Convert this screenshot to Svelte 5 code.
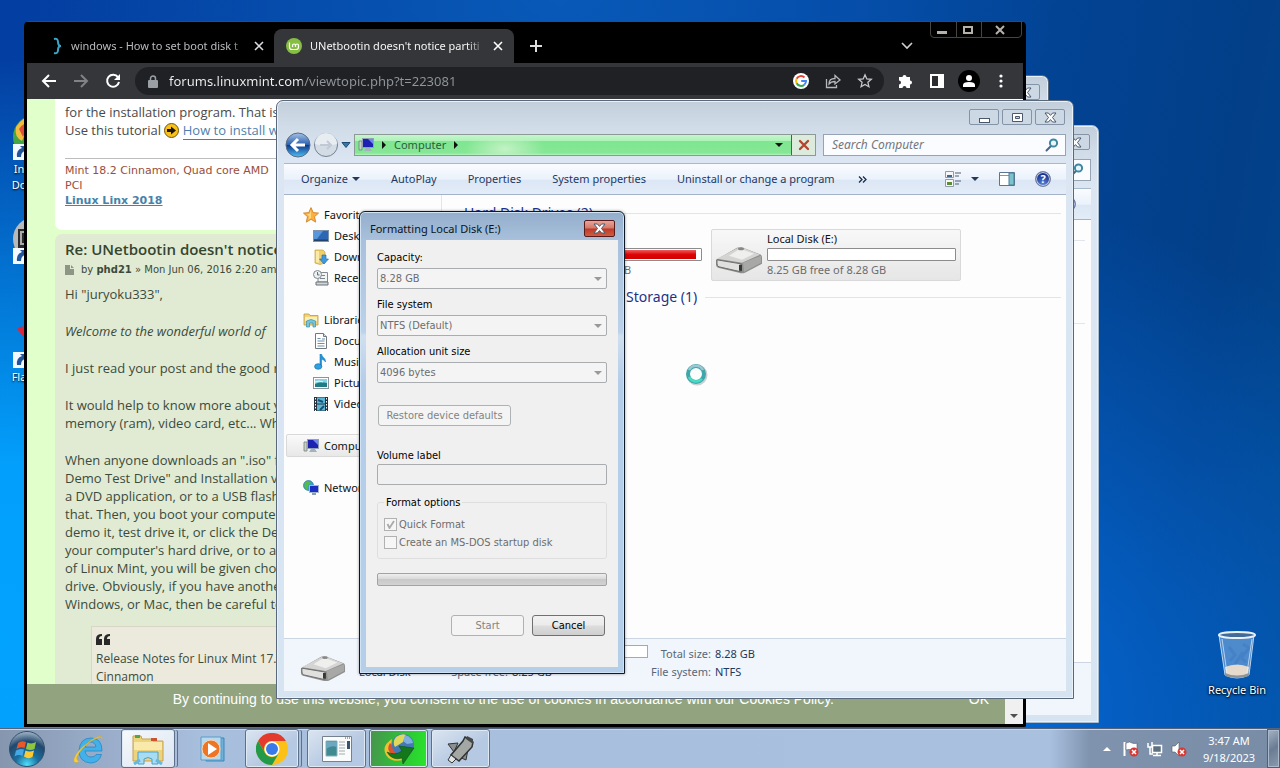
<script lang="ts">
	type NavItem = { label: string; icon: string; child?: boolean; selected?: boolean };

	const navGroups: NavItem[][] = [
		[
			{ label: 'Favorites', icon: 'star' },
			{ label: 'Desktop', icon: 'desktop', child: true },
			{ label: 'Downloads', icon: 'downloads', child: true },
			{ label: 'Recent Places', icon: 'recent', child: true }
		],
		[
			{ label: 'Libraries', icon: 'libraries' },
			{ label: 'Documents', icon: 'document', child: true },
			{ label: 'Music', icon: 'music', child: true },
			{ label: 'Pictures', icon: 'pictures', child: true },
			{ label: 'Videos', icon: 'videos', child: true }
		],
		[{ label: 'Computer', icon: 'computer', selected: true }],
		[{ label: 'Network', icon: 'network' }]
	];

	const commands = ['AutoPlay', 'Properties', 'System properties', 'Uninstall or change a program'];

	const drives = [
		{ name: 'Local Disk (C:)', used: 98, space: '324 MB free of 23.6 GB', selected: false },
		{ name: 'Local Disk (E:)', used: 0, space: '8.25 GB free of 8.28 GB', selected: true }
	];

	const fields = [
		{ id: 'capacity', label: 'Capacity:', value: '8.28 GB' },
		{ id: 'filesystem', label: 'File system', value: 'NTFS (Default)' },
		{ id: 'allocation', label: 'Allocation unit size', value: '4096 bytes' }
	];

	let url = $state('forums.linuxmint.com/viewtopic.php?t=223081');
	let search = $state('');
	let volumeLabel = $state('');
</script>

{#snippet closeGlyph()}
	<svg width="13" height="11" viewBox="0 0 13 11" aria-hidden="true">
		<path d="M1 1h3.4l2.1 2.4L8.600 1H12L8.500 5.500 12 10H8.600L6.500 7.600 4.400 10H1l3.500-4.500z" fill="#fff" stroke="#4b586b" />
	</svg>
{/snippet}

{#snippet windowButtons()}
	<div class="frame-buttons">
		<button aria-label="Minimize">
			<svg width="13" height="11" viewBox="0 0 13 11"><rect x="1.500" y="6.500" width="10" height="4" fill="#fff" stroke="#4b586b" /></svg>
		</button>
		<button aria-label="Maximize">
			<svg width="13" height="11" viewBox="0 0 13 11"><path d="M1.500 1.500h10v8h-10z" fill="#fff" stroke="#4b586b" /><path d="M4.500 4.500h4v2h-4z" fill="#c7d3e2" stroke="#4b586b" /></svg>
		</button>
		<button aria-label="Close">{@render closeGlyph()}</button>
	</div>
{/snippet}

{#snippet magnifier()}
	<svg class="magnifier" width="14" height="14" viewBox="0 0 14 14" aria-hidden="true">
		<path d="M1.500 12.500 6 8" stroke="#4a6580" stroke-width="2" stroke-linecap="round" />
		<circle cx="8.500" cy="5" r="3.600" fill="#e8f6fb" stroke="#3f87a3" stroke-width="2" />
	</svg>
{/snippet}

{#snippet drive(size: number)}
	<svg width={size} height={size * 0.66} viewBox="0 0 48 30" aria-hidden="true">
		<path d="M1 15 22 3q3-1 6 0l18 7q1 1 1 3v6L30 28q-3 1-6 0L3 23q-2-1-2-3z" fill="#8f908e" />
		<path d="M2 14 23 3q3-1 5 0l17 7L27 18z" fill="#d4d4d2" />
		<path d="M14 11 25 4l14 5-12 6z" fill="#efefed" />
		<path d="M2 15l24 4v8L4 22q-2-1-2-3z" fill="#e0e0df" stroke="#6c6d6b" />
		<path d="M28 18 46 11v7L29 27z" fill="#a8a9a7" />
		<path d="M24 20h3v6h-3z" fill="#333a35" />
		<ellipse cx="26" cy="4" rx="3" ry="1.500" fill="#888" />
	</svg>
{/snippet}

{#snippet navIcon(name: string)}
	<svg width="16" height="16" viewBox="0 0 16 16" aria-hidden="true">
		{#if name === 'star'}
			<path d="M8 .6l2.200 5 5.300.5-4 3.600 1.200 5.400L8 12.300l-4.700 2.800 1.200-5.400-4-3.600 5.300-.5z" fill="#fbb040" stroke="#d08226" stroke-width=".9" />
			<path d="M8 3v8l-2.600 1.600.8-3.300L4 7.200l2.700-.4z" fill="#ffd680" />
		{:else if name === 'desktop'}
			<rect x=".5" y="2.500" width="15" height="11" fill="#2b67b5" stroke="#7d93ad" />
			<path d="M1 3h9L4 11H1z" fill="#5796d8" /><path d="M1 11.500h14V13H1z" fill="#264264" />
		{:else if name === 'downloads'}
			<path d="M2 1h8l2 2v11l-5 1.500L2 14z" fill="#f0cf68" stroke="#c99d3c" stroke-width=".7" />
			<path d="M3 2h3v12l-3-1z" fill="#fbe9a8" />
			<path d="M9 6h4v4h2.500L11 15 6.500 10H9z" fill="#3e9ae0" stroke="#1b65ab" stroke-width=".6" />
		{:else if name === 'recent'}
			<path d="M5 2.500h9.500V12H5z" fill="#f3f4f4" stroke="#84898e" /><path d="M8 5.500h4M7 8.500h5" stroke="#7d858c" />
			<circle cx="4.500" cy="4.500" r="4" fill="#edf1f4" stroke="#7d8791" /><path d="M4.500 2v3h2M3 12h12v3H3z" fill="#d1d4d6" stroke="#6b737b" />
		{:else if name === 'libraries'}
			<path d="M1 2h5l1 1.500h8V13H1z" fill="#f3d47b" stroke="#bd9844" stroke-width=".8" /><path d="M2 5h12v4H2z" fill="#fbefb9" />
			<path d="M3.500 15V9q4.500-3 9 0v6h-2.500v-4H6.500v4z" fill="#78c6dc" stroke="#3891af" stroke-width=".7" />
		{:else if name === 'document'}
			<path d="M2.500.5h8l3 3v12h-11z" fill="#fff" stroke="#71797f" /><path d="M10.500.5v3h3" fill="#dadfe3" stroke="#71797f" />
			<path d="M4.500 5.500h3M4.500 8h7M4.500 10.500h7M4.500 13h7M9 6h3" stroke="#6b8fac" />
		{:else if name === 'music'}
			<path d="M7 0h1.500c0 3 4.500 4 4 8-1-2-3-2.500-4-2.500v7H7z" fill="#2593d6" stroke="#1c7fc0" stroke-width=".6" />
			<ellipse cx="5.200" cy="12.500" rx="3.600" ry="2.800" fill="#2ba2e4" stroke="#1c6fa8" stroke-width=".7" />
		{:else if name === 'pictures'}
			<rect x=".5" y="2.500" width="15" height="11" fill="#fff" stroke="#8c949b" /><path d="M2 4h12v8H2z" fill="#86d3e2" />
			<path d="M2 9q5-3 12-1v4H2z" fill="#1f7c84" /><path d="M2 7q4-2 8 0" stroke="#e6fafd" fill="none" />
		{:else if name === 'videos'}
			<path d="M1 1h14v14H1z" fill="#26323f" /><path d="M4 1.500h8v6H4zM4 8.500h8v6H4z" fill="#5cb7d4" />
			<path d="M5 4l5 2M7 14l4-4" stroke="#164e78" stroke-width="2" /><path d="M2.500 2v13M13.500 2v13" stroke="#fff" stroke-dasharray="1.500 1.500" />
		{:else if name === 'computer'}
			<path d="M1 4h3v9H1z" fill="#c9cfc9" stroke="#75807a" stroke-width=".8" /><rect x="4.500" y="1.500" width="11" height="9" fill="#1d22b0" stroke="#93a0b5" />
			<path d="M10 2h5v5z" fill="#7189ee" /><path d="M8 11h4l2 3H6z" fill="#a4b2bf" />
		{:else}
			<circle cx="5.500" cy="5.500" r="5" fill="#35a0cf" stroke="#1b6a9b" stroke-width=".6" /><path d="M2 2q4-2 6 1L5 5q1 3-1 5Q0 7 2 2z" fill="#58bb44" />
			<rect x="6.500" y="5.500" width="9" height="7" fill="#1c2fc4" stroke="#a7b6cb" /><path d="M9 13h4v2H9z" fill="#8aa0b8" />
		{/if}
	</svg>
{/snippet}

{#snippet shortcut(glyph: string)}
	<svg width="48" height="48" viewBox="0 0 48 48" aria-hidden="true">
		{#if glyph === 'idm'}
			<circle cx="22" cy="24" r="22" fill="#46a545" /><path d="M3 14Q10 2 25 3v14Q12 18 9 28 1 24 3 14z" fill="#f1bd3d" /><path d="M6 16q6-9 18-8v7Q12 16 10 24z" fill="#df5137" />
		{:else if glyph === 'disc'}
			<circle cx="22" cy="22" r="22" fill="#b8b9b9" /><path d="M5 12h20v20H5z" fill="#292b2c" /><path d="M8 15h9v12H8z" fill="none" stroke="#aaa" stroke-width="2" />
		{:else}
			<path d="M4 8l5-3 12 12-6 4z" fill="#dd263b" />
		{/if}
		<path d="M0 31h16v16H0z" fill="#f4f8ff" /><path d="M4 44q-1-7 5-9l-2-2h7v7l-2-2q-4 1-4 6z" fill="#21569f" />
	</svg>
{/snippet}

<div class="screen">
	<main class="desktop">
		<div class="shortcuts">
			<div class="shortcut">{@render shortcut('idm')}<span>In<br />Do</span></div>
			<div class="shortcut">{@render shortcut('disc')}</div>
			<div class="shortcut">{@render shortcut('flash')}<span>Fla</span></div>
		</div>

		<div class="recycle">
			<svg width="40" height="50" viewBox="0 0 40 50" aria-hidden="true">
				<path d="M2 5h35l-5 40q-12 6-24 0z" fill="#a9c9ee" fill-opacity=".45" stroke="#bcd4ee" />
				<path d="M8 37q12-5 24 0l-1 8q-11 5-22 0z" fill="#e6dacd" /><path d="M8 43q12 5 24 0v3q-12 4-24 0z" fill="#8e9599" />
				<path d="M12 17l6 8-5 6M26 14l6 4-8 10 5 4M18 34l8-12" fill="none" stroke="#3f7cc3" stroke-width="3" opacity=".6" />
				<path d="M5 9l5 34M35 9l-5 34" stroke="#e3f1ff" opacity=".7" />
				<ellipse cx="20" cy="5" rx="18" ry="3" fill="#436b9a" stroke="#e8f1f8" stroke-width="2" />
			</svg>
			<span>Recycle Bin</span>
		</div>

		<section class="window explorer back-upper" aria-label="Explorer">
			<header class="titlebar">{@render windowButtons()}</header>
		</section>

		<section class="window explorer back-lower" aria-label="Libraries">
			<header class="titlebar">{@render windowButtons()}</header>
			<div class="navbar">
				<div class="search">{@render magnifier()}</div>
			</div>
			<div class="client">
				<div class="commandbar"><span class="help">?</span></div>
				<div class="back-body"><hr /><hr /></div>
				<div class="details"></div>
			</div>
		</section>

		<section class="window browser" aria-label="Chrome">
			<header class="tabstrip">
				<div class="tab">
					<svg width="16" height="18" viewBox="0 0 16 18" aria-hidden="true"><path d="M5 2q4-1 4 3t3 4q-3 0-3 4t-4 3" fill="none" stroke="#3aa5c4" stroke-width="2" /></svg>
					<span>windows - How to set boot disk t</span>
					<button aria-label="Close tab"><svg width="10" height="10" viewBox="0 0 10 10"><path d="M1 1l8 8M9 1 1 9" stroke="#dadce0" stroke-width="1.600" /></svg></button>
				</div>
				<div class="tab active">
					<svg width="16" height="16" viewBox="0 0 16 16" aria-hidden="true"><circle cx="8" cy="8" r="8" fill="#86be43" /><path d="M3.500 4.500V9q0 2.500 2.500 2.500h4Q12.500 11.500 12.500 9V7.500q0-1.500-1.500-1.500T9.500 7.500V9M9.500 7.500Q9.500 6 8 6T6.500 7.500V9" fill="none" stroke="#fff" stroke-width="1.200" /></svg>
					<span>UNetbootin doesn't notice partiti</span>
					<button aria-label="Close tab"><svg width="10" height="10" viewBox="0 0 10 10"><path d="M1 1l8 8M9 1 1 9" stroke="#fff" stroke-width="1.600" /></svg></button>
				</div>
				<button class="new-tab" aria-label="New tab"><svg width="12" height="12" viewBox="0 0 12 12"><path d="M6 0v12M0 6h12" stroke="#dcdcdc" stroke-width="2" /></svg></button>
				<button class="tab-search" aria-label="Search tabs"><svg width="12" height="8" viewBox="0 0 12 8"><path d="M1 1l5 5 5-5" fill="none" stroke="#d0d0d0" stroke-width="1.600" /></svg></button>
				<div class="dark-buttons">
					<button aria-label="Minimize"><svg width="12" height="10" viewBox="0 0 12 10"><path d="M1 6h10v3H1z" fill="#b6b1aa" /></svg></button>
					<button aria-label="Maximize"><svg width="12" height="10" viewBox="0 0 12 10"><path d="M2 2h8v6H2z" fill="none" stroke="#b6b1aa" stroke-width="2" /></svg></button>
					<button aria-label="Close"><svg width="12" height="10" viewBox="0 0 12 10"><path d="M2 1l8 8M10 1 2 9" stroke="#b6b1aa" stroke-width="2" /></svg></button>
				</div>
			</header>

			<div class="browser-toolbar">
				<button aria-label="Back"><svg width="16" height="16" viewBox="0 0 16 16"><path d="M15 8H2M8 2 2 8l6 6" fill="none" stroke="#fff" stroke-width="2" /></svg></button>
				<button aria-label="Forward"><svg width="16" height="16" viewBox="0 0 16 16"><path d="M1 8h13M8 2l6 6-6 6" fill="none" stroke="#808285" stroke-width="2" /></svg></button>
				<button aria-label="Reload"><svg width="16" height="16" viewBox="0 0 16 16"><path d="M13 4.200A6 6 0 1 0 14 9" fill="none" stroke="#fff" stroke-width="2" /><path d="M15 1v6H9z" fill="#fff" /></svg></button>
				<div class="omnibox">
					<svg width="10" height="13" viewBox="0 0 10 13" aria-hidden="true"><rect y="5" width="10" height="8" rx="1" fill="#9aa0a6" /><path d="M2.500 6V3.500a2.500 2.500 0 0 1 5 0V6" fill="none" stroke="#9aa0a6" stroke-width="1.500" /></svg>
					<input aria-label="Address" bind:value={url} />
					<svg width="16" height="16" viewBox="0 0 16 16" aria-hidden="true">
						<circle cx="8" cy="8" r="8" fill="#fff" />
						<path d="M11.500 4.500A5 5 0 0 0 3.600 5.700" fill="none" stroke="#ea4335" stroke-width="2" /><path d="M3.600 5.700a5 5 0 0 0 0 4.600" fill="none" stroke="#fbbc05" stroke-width="2" />
						<path d="M3.600 10.300a5 5 0 0 0 7.700 1.400" fill="none" stroke="#34a853" stroke-width="2" /><path d="M11.300 11.700A5 5 0 0 0 13 8H8.200" fill="none" stroke="#4285f4" stroke-width="2" />
					</svg>
					<svg width="16" height="16" viewBox="0 0 16 16" fill="none" stroke="#b5b8bc" stroke-width="1.300" aria-hidden="true"><path d="M1.500 6v8.500h10V12M4 11q0-5.500 6-5.500V2.500L15 7l-5 4V8.500q-4 0-6 2.500z" /></svg>
					<svg width="16" height="16" viewBox="0 0 16 16" aria-hidden="true"><path d="M8 1.800l1.800 4.100 4.500.4-3.400 3 1 4.400L8 11.400l-3.900 2.300 1-4.400-3.400-3 4.500-.4z" fill="none" stroke="#c5c8cc" stroke-width="1.300" /></svg>
				</div>
				<button aria-label="Extensions"><svg width="16" height="16" viewBox="0 0 16 16"><path d="M2 4h3.500a2 2 0 1 1 4 0H13v3.500a2 2 0 1 1 0 4V15H9.500a2 2 0 0 0-4 0H2v-3.500a2 2 0 0 0 0-4z" fill="#fff" /></svg></button>
				<button aria-label="Side panel"><svg width="16" height="16" viewBox="0 0 16 16"><path d="M2 2h12v12H2z" fill="#2c2d30" stroke="#fff" stroke-width="2" /><path d="M9 2h5v12H9z" fill="#fff" /></svg></button>
				<button aria-label="Profile"><svg width="22" height="22" viewBox="0 0 22 22"><circle cx="11" cy="11" r="11" fill="#000" /><circle cx="11" cy="8" r="3" fill="#fff" /><path d="M5 17v-2q0-3 6-3t6 3v2z" fill="#fff" /></svg></button>
				<button aria-label="Menu"><svg width="4" height="14" viewBox="0 0 4 14"><circle cx="2" cy="2" r="1.600" fill="#fff" /><circle cx="2" cy="7" r="1.600" fill="#fff" /><circle cx="2" cy="12" r="1.600" fill="#fff" /></svg></button>
			</div>

			<div class="page">
				<article class="post first">
					<div class="post-text">
						for the installation program. That is<br />
						Use this tutorial
						<svg class="arrow-smiley" width="15" height="15" viewBox="0 0 15 15" aria-hidden="true"><circle cx="7.500" cy="7.500" r="7" fill="#f9c21b" stroke="#6e5410" /><path d="M3 6h4V3.500l5 4-5 4V9H3z" fill="#1d1604" /></svg>
						<a href="#tutorial">How to install with</a>
					</div>
					<div class="signature">
						Mint 18.2 Cinnamon, Quad core AMD<br />PCI<br />
						<a href="#linx">Linux Linx 2018</a>
					</div>
				</article>

				<article class="post second">
					<h3>Re: UNetbootin doesn't notice</h3>
					<div class="byline">
						<svg width="9" height="10" viewBox="0 0 9 10" aria-hidden="true"><path d="M0 0h5v4h4v6H0zM6 0l3 3H6z" fill="#8d9585" /></svg>
						<span>by <strong>phd21</strong> » Mon Jun 06, 2016 2:20 am</span>
					</div>
					<div class="post-text">
						<p>Hi "juryoku333",</p>
						<p><em>Welcome to the wonderful world of</em></p>
						<p>I just read your post and the good re</p>
						<p>It would help to know more about yo<br />memory (ram), video card, etc... Wh</p>
						<p>
							When anyone downloads an ".iso" file<br />Demo Test Drive" and Installation ver<br />a DVD application, or to a USB flash<br />
							that. Then, you boot your computer<br />demo it, test drive it, or click the De<br />your computer's hard drive, or to an<br />
							of Linux Mint, you will be given choic<br />drive. Obviously, if you have another<br />Windows, or Mac, then be careful to
						</p>
					</div>
					<blockquote>
						<svg width="14" height="12" viewBox="0 0 14 12" aria-hidden="true"><path d="M6 0v2Q3 2 3 5h3v6H0V5q0-5 6-5zM14 0v2q-3 0-3 3h3v6H8V5q0-5 6-5z" fill="#292929" /></svg>
						<div>Release Notes for Linux Mint 17.<br />Cinnamon</div>
					</blockquote>
				</article>

				<div class="cookie-row">
					<div class="cookiebar">
						<p>By continuing to use this website, you consent to the use of cookies in accordance with our Cookies Policy.</p>
						<button>OK</button>
					</div>
					<button class="scroll-down" aria-label="Scroll down"><svg width="8" height="4" viewBox="0 0 8 4"><path d="M0 0h8L4 4z" fill="#505050" /></svg></button>
				</div>
			</div>
		</section>

		<section class="window explorer front" aria-label="Computer">
			<header class="titlebar">{@render windowButtons()}</header>
			<div class="navbar">
				<div class="travel">
					<button aria-label="Back">
						<svg width="26" height="26" viewBox="0 0 26 26">
							<defs><linearGradient id="orb" x2="0" y2="1"><stop stop-color="#a5c2e8" /><stop offset=".48" stop-color="#2e62ae" /><stop offset=".52" stop-color="#0f3c8d" /><stop offset="1" stop-color="#4fc0f4" /></linearGradient></defs>
							<circle cx="13" cy="13" r="12" fill="url(#orb)" stroke="#5a6b83" /><path d="M20 13H8M13 7l-6 6 6 6" fill="none" stroke="#fff" stroke-width="3" />
						</svg>
					</button>
					<button aria-label="Forward">
						<svg width="26" height="26" viewBox="0 0 26 26"><circle cx="13" cy="13" r="11.500" fill="#d3dbe5" stroke="#748294" /><path d="M2 12a11 11 0 0 1 22 0q-11 3-22 0z" fill="#e8edf2" /><path d="M7 13h11M14 9l4 4-4 4" fill="none" stroke="#c0c9d4" stroke-width="2" /></svg>
					</button>
					<button aria-label="Recent pages"><svg width="10" height="6" viewBox="0 0 10 6"><path d="M1 .5h8l-4 5z" fill="#3977a6" stroke="#1e4a78" /></svg></button>
				</div>
				<div class="addressbar">
					{@render navIcon('computer')}
					<svg width="4" height="8" viewBox="0 0 4 8" aria-hidden="true"><path d="M0 0l4 4-4 4z" fill="#111" /></svg>
					<button class="crumb">Computer</button>
					<svg width="4" height="8" viewBox="0 0 4 8" aria-hidden="true"><path d="M0 0l4 4-4 4z" fill="#111" /></svg>
					<button class="history" aria-label="Previous locations"><svg width="8" height="4" viewBox="0 0 8 4"><path d="M0 0h8L4 4z" fill="#111" /></svg></button>
					<button class="stop" aria-label="Stop"><svg width="12" height="12" viewBox="0 0 12 12"><path d="M2 2l8 8M10 2l-8 8" stroke="#b3452f" stroke-width="2.400" stroke-linecap="round" /></svg></button>
				</div>
				<div class="search">
					<input type="search" aria-label="Search Computer" placeholder="Search Computer" bind:value={search} />
					{@render magnifier()}
				</div>
			</div>

			<div class="client">
				<div class="commandbar">
					<button class="organize">Organize <svg width="8" height="4" viewBox="0 0 8 4"><path d="M0 0h8L4 4z" fill="#26395c" /></svg></button>
					{#each commands as command (command)}
						<button>{command}</button>
					{/each}
					<button class="more" aria-label="More commands"><svg width="9" height="7" viewBox="0 0 9 7"><path d="M1 .5l3 3-3 3M5 .5l3 3-3 3" fill="none" stroke="#1b2b4a" stroke-width="1.300" /></svg></button>
					<div class="view-tools">
						<button aria-label="Change view">
							<svg width="18" height="16" viewBox="0 0 18 16"><path d="M.5.500h8v6h-8zM.5 8.500h8v7h-8z" fill="#f5f7f9" stroke="#8e9aa5" /><path d="M2 4h5v2H2z" fill="#41648f" /><path d="M2 11h5v3H2z" fill="#5c8d2e" /><path d="M10 2h6M10 5h4M10 10h6M10 13h4" stroke="#4f5f72" /></svg>
							<svg width="8" height="4" viewBox="0 0 8 4"><path d="M0 0h8L4 4z" fill="#26395c" /></svg>
						</button>
						<button aria-label="Preview pane"><svg width="16" height="14" viewBox="0 0 16 14"><path d="M.5.500h15v13H.5z" fill="#fff" stroke="#5c7591" /><path d="M1 3.500h9" stroke="#7b98b4" /><path d="M10 1h5v12h-5z" fill="#7bc4cb" stroke="#4c7d96" /></svg></button>
						<button aria-label="Help"><span class="help">?</span></button>
					</div>
				</div>

				<div class="browse">
					<nav>
						{#each navGroups as group}
							<ul>
								{#each group as item (item.label)}
									<li class:child={item.child} class:selected={item.selected}>
										<a href="#{item.icon}">{@render navIcon(item.icon)}{item.label}</a>
									</li>
								{/each}
							</ul>
						{/each}
					</nav>
					<div class="files">
						<h2>Hard Disk Drives (2)</h2>
						<div class="tiles">
							{#each drives as item (item.name)}
								<div class="tile" class:selected={item.selected}>
									{@render drive(48)}
									<div class="tile-copy">
										<span>{item.name}</span>
										<div class="capacity"><div class="capacity-used" style:width="{item.used}%"></div></div>
										<span class="space">{item.space}</span>
									</div>
								</div>
							{/each}
						</div>
						<h2>Devices with Removable Storage (1)</h2>
					</div>
				</div>

				<footer class="details">
					{@render drive(46)}
					<dl class="name"><dd>Local Disk (E:)</dd><dd>Local Disk</dd></dl>
					<dl class="used"><dt>Space used:</dt><dd class="mini-bar"></dd><dt>Space free:</dt><dd>8.25 GB</dd></dl>
					<dl class="total"><dt>Total size:</dt><dd>8.28 GB</dd><dt>File system:</dt><dd>NTFS</dd></dl>
				</footer>
			</div>
		</section>

		<section class="dialog" role="dialog" aria-label="Formatting Local Disk (E:)">
			<header>
				<h1>Formatting Local Disk (E:)</h1>
				<button aria-label="Close">{@render closeGlyph()}</button>
			</header>
			<form>
				{#each fields as field (field.id)}
					<div class="field">
						<label for={field.id}>{field.label}</label>
						<select id={field.id} disabled><option>{field.value}</option></select>
					</div>
				{/each}
				<button class="restore" type="button" disabled>Restore device defaults</button>
				<div class="field volume">
					<label for="volume">Volume label</label>
					<input id="volume" type="text" disabled bind:value={volumeLabel} />
				</div>
				<fieldset>
					<legend>Format options</legend>
					<label><input type="checkbox" checked disabled />Quick Format</label>
					<label><input type="checkbox" disabled />Create an MS-DOS startup disk</label>
				</fieldset>
				<progress value="0" max="100" aria-label="Format progress"></progress>
				<div class="actions">
					<button type="button" disabled>Start</button>
					<button type="button">Cancel</button>
				</div>
			</form>
		</section>

		<svg class="busy" width="24" height="24" viewBox="0 0 24 24" aria-hidden="true">
			<circle cx="13" cy="13" r="9" fill="none" stroke="#9ba3a6" stroke-width="3" opacity=".5" />
			<circle cx="12" cy="12" r="8" fill="#fbfdfd" stroke="#3fa6a9" stroke-width="4" />
			<path d="M5 8A8 8 0 0 1 19 8" fill="none" stroke="#9cc7d3" stroke-width="2.500" /><path d="M5 15a8 8 0 0 0 13 2" fill="none" stroke="#46dcc6" stroke-width="2.500" />
		</svg>
	</main>

	<footer class="taskbar">
		<button class="start" aria-label="Start">
			<svg width="38" height="38" viewBox="0 0 38 38">
				<defs><radialGradient id="start" cy=".95" r=".95"><stop stop-color="#4fe1fb" /><stop offset=".35" stop-color="#1a6f9f" /><stop offset=".7" stop-color="#21476c" /><stop offset="1" stop-color="#a6b9ca" /></radialGradient></defs>
				<circle cx="19" cy="19" r="17.500" fill="url(#start)" stroke="#31506e" />
				<path d="M10 13q4-3 8-1l-1.500 6q-4-2-8 1z" fill="#e9582b" /><path d="M19.500 12.500q4 2 8.500-.5l-1.500 7q-4 2-8.500 0z" fill="#8fc63d" />
				<path d="M8 20.500q4-2.500 8-1L14.500 26q-4-2-8 .5z" fill="#44a7e6" /><path d="M17.500 20.500q4 2 8.500 0l-1.500 6.500q-4 2.500-8.500-.5z" fill="#fdc932" />
			</svg>
		</button>
		<button class="task" aria-label="Internet Explorer">
			<svg width="34" height="32" viewBox="0 0 34 32"><path d="M30 18H13q1 6 6 6 4 0 5-2.500h5.500Q27 30 18.500 30 7 29 7 17.500 8 5 19 5t11 13zM13 14h11q-1-5-5.500-5T13 14z" fill="#42b1ea" stroke="#2a86c5" stroke-width=".8" /><path d="M32 6q-3-6-14 2Q4 18 2 26q-1 6 6 2-4 0-3-4Q8 16 19 8q10-6 13-2z" fill="#f5d043" stroke="#d9ab20" stroke-width=".6" /></svg>
		</button>
		<button class="task open stacked bright" aria-label="Windows Explorer">
			<svg width="34" height="32" viewBox="0 0 34 32"><path d="M2 3h8l1 3h10l1 2h10v20H2z" fill="#eed37d" stroke="#c4a14e" /><path d="M3 9h28v8H3z" fill="#f9eaac" /><path d="M4 2h5v3H4z" fill="#50a64a" /><path d="M20 5h6v3h-6z" fill="#c85432" /><path d="M7 31V19h20v12h-6v-5q-4-3-8 0v5z" fill="#a7dcf3" stroke="#4aa0cc" /><path d="M3 31l6-4M31 31l-6-4" stroke="#66b8de" stroke-width="3" /></svg>
		</button>
		<button class="task" aria-label="Media Player">
			<svg width="28" height="26" viewBox="0 0 28 26"><path d="M7 2h18v23H7z" fill="#6fb1d8" stroke="#3b87b9" /><path d="M2 1h20v23H2z" fill="#b5d9ee" stroke="#5b9cc7" /><circle cx="12" cy="13" r="9" fill="#ee7526" stroke="#fbd5b2" /><path d="M9 7v12l9-6z" fill="#fff" /></svg>
		</button>
		<button class="task open stacked" aria-label="Google Chrome">
			<svg width="32" height="32" viewBox="0 0 32 32"><circle cx="16" cy="16" r="16" fill="#fbc116" /><path d="M2.100 8A16 16 0 0 1 29.900 8H16a8 8 0 0 0-7 12z" fill="#e33b2e" /><path d="M2.100 8A16 16 0 0 0 16 32l7-12a8 8 0 0 1-14 0z" fill="#229a49" /><circle cx="16" cy="16" r="7.500" fill="#fff" /><circle cx="16" cy="16" r="6" fill="#3a7ae8" /></svg>
		</button>
		<button class="task open" aria-label="Application">
			<svg width="30" height="26" viewBox="0 0 30 26"><path d="M.5.500h29v25H.5z" fill="#fafbfb" stroke="#75828d" /><path d="M4 5h11v15H4z" fill="#3f8990" stroke="#8ab0bd" /><path d="M4 6h11v5q-6-2-11 2z" fill="#6ca8bf" /><path d="M17 6h6M17 9h6M17 12h6M17 15h6M17 18h6" stroke="#a4abb2" /><path d="M25 5h3v8h-3z" fill="#38536f" /><path d="M23 2h5" stroke="#41505f" stroke-dasharray="1 1" /></svg>
		</button>
		<button class="task open green" aria-label="Internet Download Manager">
			<svg width="34" height="32" viewBox="0 0 34 32">
				<path d="M10 6Q-1 13 4 22q5 8 17 5l-3-6Q8 21 9 13z" fill="#f1c02e" /><path d="M8 10q-4 6 1 11 4 3 9 2l-1-3q-7 0-6-7z" fill="#d9532c" />
				<circle cx="21" cy="12" r="11" fill="#4479b8" /><path d="M14 4q6-4 10-2l-3 7-8 5q-3-5 1-10z" fill="#e0d85a" /><path d="M23 2q7 2 8 8l-6 1-4-3z" fill="#7fb0de" />
				<path d="M5 19q8 4 15-1l-3-5 15 2-11 16-1-6q-10 3-15-6z" fill="#13771c" stroke="#0b5213" stroke-width=".6" />
			</svg>
		</button>
		<button class="task open" aria-label="UNetbootin">
			<svg width="32" height="32" viewBox="0 0 32 32"><path d="M13 10 3 11l6 8zM23 16l-2 11-7-3z" fill="#8b8e8e" stroke="#333" /><path d="M20 4l8 5-1 5-13 14-8-6L18 8z" fill="#a4a8a5" stroke="#2f3231" stroke-width="1.500" /><path d="M22 3l6 3v5l-7-5z" fill="#454848" /><path d="M6 22l5 4-4 4-4-3z" fill="#e2e5e5" stroke="#333" /></svg>
		</button>

		<div class="tray">
			<button class="expand" aria-label="Show hidden icons"><svg width="8" height="4" viewBox="0 0 8 4"><path d="M0 4h8L4 0z" fill="#fff" /></svg></button>
			<button aria-label="Action Center"><svg width="16" height="16" viewBox="0 0 16 16"><path d="M1.500 1v14" stroke="#fff" stroke-width="2" /><path d="M3 2q4-2 6 0 3 1 5 0v7q-3 1-5 0-3-1-6 0z" fill="#fff" stroke="#4d5966" stroke-width=".6" /><circle cx="11" cy="11" r="4.500" fill="#d63a35" /><path d="M9 9l4 4M13 9l-4 4" stroke="#fff" stroke-width="1.500" /></svg></button>
			<button aria-label="Network"><svg width="16" height="16" viewBox="0 0 16 16"><path d="M5.500 4.500h9v7h-9z" fill="#5f7080" stroke="#fff" stroke-width="1.500" /><path d="M10 12v2M6 14.500h8M1 2v4h4V1M3 6v7h3" fill="none" stroke="#fff" stroke-width="1.500" /></svg></button>
			<button aria-label="Volume muted"><svg width="16" height="16" viewBox="0 0 16 16"><path d="M1 5h3l4-4v14l-4-4H1z" fill="#fff" stroke="#4d5966" stroke-width=".6" /><circle cx="11" cy="11" r="4.500" fill="#d63a35" /><path d="M9 9l4 4M13 9l-4 4" stroke="#fff" stroke-width="1.500" /></svg></button>
			<div class="clock"><time>3:47 AM</time><time>9/18/2023</time></div>
			<button class="show-desktop" aria-label="Show desktop"></button>
		</div>
	</footer>
</div>

<style>
	:global(body) {
		margin: 0;
	}

	.screen,
	.screen :global(*) {
		box-sizing: border-box;
	}

	.screen {
		display: flex;
		flex-direction: column;
		height: 100vh;
		min-height: 700px;
		overflow: hidden;
		font-family: 'Noto Sans', 'Segoe UI', sans-serif;
		font-size: 11px;
		line-height: 16px;
		color: #111;
	}

	.screen svg {
		display: block;
		flex: none;
	}

	button {
		display: flex;
		align-items: center;
		justify-content: center;
		padding: 0;
		border: 0;
		background: none;
		font: inherit;
		color: inherit;
		white-space: nowrap;
	}

	input {
		min-width: 0;
		border: 0;
		outline: 0;
		padding: 0;
		background: none;
		font: inherit;
	}

	h1,
	h2,
	h3,
	p,
	ul,
	dl,
	dd {
		margin: 0;
		padding: 0;
		font-weight: 400;
	}

	.desktop {
		position: relative;
		flex: 1;
		min-height: 0;
		background:
			radial-gradient(ellipse 560px 580px at 0 640px, #02a2ff 0, #02a0fc 30%, rgba(2, 100, 215, 0) 100%),
			radial-gradient(ellipse 560px 520px at 960px 720px, #056ad8 0, rgba(5, 90, 190, 0) 100%),
			radial-gradient(ellipse 500px 300px at 560px 0, #0859b8 0, rgba(5, 80, 170, 0) 100%),
			linear-gradient(100deg, #033fa2 0, #0347a0 60%, #023f88 90%, #02488f 100%);
	}

	/* desktop icons */
	.shortcuts {
		display: flex;
		flex-direction: column;
		gap: 12px;
		width: 64px;
		padding: 113px 0 0 8px;
		color: #fff;
		text-shadow: 0 1px 2px #000;
	}

	.shortcut {
		height: 92px;
	}

	.shortcut svg {
		margin-left: 5px;
	}

	.shortcut span {
		display: block;
		width: 22px;
		text-align: center;
	}

	.recycle {
		position: absolute;
		right: 12px;
		bottom: 30px;
		display: flex;
		flex-direction: column;
		align-items: center;
		gap: 2px;
		width: 62px;
		color: #fff;
		white-space: nowrap;
		text-shadow: 0 1px 2px #000, 0 0 3px #000;
	}

	.window {
		position: absolute;
		display: flex;
		flex-direction: column;
	}

	/* explorer */
	.explorer {
		padding: 0 7px 7px;
		border: 1px solid #59687a;
		border-radius: 7px 7px 0 0;
		background: linear-gradient(180deg, #c2ced9 0, #cfdbe6 24px, #dce6f3 60px, #dce6f3 90px, #d6e4f2 100%);
		box-shadow: inset 0 0 0 1px #e8f0f8;
	}

	.back-upper {
		inset: 75px 231px 55px 251px;
	}

	.back-lower {
		inset: 125px 181px 5px 301px;
		border-color: #a8bccd;
	}

	.front {
		inset: 100px 206px 29px 276px;
	}

	.titlebar {
		display: flex;
		justify-content: flex-end;
		height: 33px;
		padding: 8px 1px 0;
	}

	.frame-buttons {
		display: flex;
		gap: 3px;
	}

	.frame-buttons button {
		width: 30px;
		height: 16px;
		border: 1px solid #8493a8;
		border-radius: 2px;
		background: #cdd8e5;
	}

	.navbar {
		display: flex;
		align-items: center;
		gap: 7px;
		height: 22px;
	}

	.travel {
		display: flex;
		align-items: center;
		gap: 2px;
		margin: 0 -4px 0 1px;
	}

	.addressbar {
		display: flex;
		align-items: center;
		flex: 1;
		gap: 8px;
		height: 22px;
		padding-left: 3px;
		border: 1px solid #8b9a95;
		background:
			radial-gradient(ellipse 40px 20px at 150px 14px, #c2f2c4, transparent),
			linear-gradient(180deg, #c5f7cc 0, #aef1b8 30%, #7ee690 32%, #86e796 90%, #b6f2be 100%);
	}

	.crumb {
		color: #29603e;
	}

	.history {
		margin-left: auto;
	}

	.stop {
		width: 24px;
		height: 20px;
		border-left: 1px solid #3c6b48;
		background: #dcebdc;
	}

	.search {
		display: flex;
		align-items: center;
		width: 243px;
		height: 22px;
		margin-left: auto;
		padding: 0 6px 0 8px;
		border: 1px solid #95a3b5;
		background: #fafcff;
	}

	.search input {
		flex: 1;
		font-size: 12px;
		font-style: italic;
	}

	.search input::placeholder {
		color: #717780;
		opacity: 1;
	}

	.magnifier {
		margin-left: auto;
	}

	.client {
		display: flex;
		flex-direction: column;
		flex: 1;
		min-height: 0;
		margin-top: 7px;
		background: #fdfdfe;
	}

	.commandbar {
		display: flex;
		align-items: center;
		gap: 31px;
		flex: none;
		height: 32px;
		padding: 0 15px 0 17px;
		border-top: 1px solid #a9b8cc;
		border-bottom: 1px solid #a3b4c9;
		background: linear-gradient(180deg, #fafcff 0, #ebf2fb 50%, #dce7f5 55%, #e3ecf8 100%);
		color: #1e3863;
	}

	.organize {
		gap: 4px;
	}

	.more {
		margin-left: -8px;
	}

	.view-tools {
		display: flex;
		align-items: center;
		gap: 20px;
		margin-left: auto;
	}

	.view-tools button {
		gap: 8px;
	}

	.help {
		width: 16px;
		height: 16px;
		border: 1px solid #747f9b;
		border-radius: 50%;
		background: radial-gradient(circle at 50% 90%, #5a86dc, #1c3592 70%);
		box-shadow: inset 0 0 0 1px #c3cce2;
		color: #fff;
		font-weight: 700;
		line-height: 14px;
		text-align: center;
	}

	.back-lower .commandbar {
		justify-content: flex-end;
		padding-right: 15px;
	}

	.back-body {
		flex: 1;
		padding: 0 6px;
	}

	.back-body hr {
		margin: 20px 0 82px;
		border: 0;
		border-top: 1px solid #e2e6ea;
	}

	.browse {
		display: flex;
		flex: 1;
		min-height: 0;
	}

	nav {
		display: flex;
		flex-direction: column;
		gap: 21px;
		width: 158px;
		padding: 9px 0 0 3px;
		border-right: 1px solid #dfe6ee;
	}

	nav ul {
		list-style: none;
	}

	nav a {
		display: flex;
		align-items: center;
		gap: 5px;
		height: 21px;
		padding-left: 16px;
		color: #111;
		text-decoration: none;
	}

	nav .child a {
		padding-left: 26px;
	}

	nav .selected {
		border: 1px solid #d9d9d9;
		margin: -1px;
		border-radius: 2px;
		background: linear-gradient(180deg, #fafafa, #e8e8e8);
	}

	.files {
		flex: 1;
		min-width: 0;
		padding: 8px 5px 0 15px;
		overflow: hidden;
	}

	h2 {
		display: flex;
		align-items: center;
		gap: 8px;
		padding-left: 7px;
		font-size: 14px;
		line-height: 20px;
		color: #1f3287;
		white-space: nowrap;
	}

	h2::after {
		content: '';
		flex: 1;
		border-top: 1px solid #e0e5ea;
	}

	.tiles {
		display: flex;
		gap: 4px;
		margin: 6px 0;
	}

	.tile {
		display: flex;
		align-items: center;
		gap: 4px;
		width: 250px;
		height: 52px;
		padding: 0 4px 2px 3px;
		border: 1px solid transparent;
		border-radius: 2px;
	}

	.tile > svg {
		margin-top: 12px;
	}

	.tile.selected {
		border-color: #d9d9d9;
		background: linear-gradient(180deg, #f8f8f8, #e6e6e6);
	}

	.tile-copy {
		display: flex;
		flex-direction: column;
		flex: 1;
	}

	.capacity {
		height: 13px;
		margin: 1px 0;
		padding: 1px;
		border: 1px solid #8c8c8c;
		border-radius: 1px;
		background: #fff;
	}

	.capacity-used {
		height: 100%;
		background: linear-gradient(180deg, #f05c5c, #dc0404 50%, #d20000);
	}

	.space {
		color: #6d6d6d;
	}

	.details {
		display: flex;
		gap: 13px;
		flex: none;
		height: 53px;
		padding: 6px 16px 0;
		border-top: 1px solid #ccd6e3;
		background: #f1f5fc;
		color: #1e395b;
		line-height: 18px;
		white-space: nowrap;
	}

	.details > svg {
		margin-top: 8px;
	}

	.details .used,
	.details .total {
		display: grid;
		grid-auto-rows: 18px;
		column-gap: 4px;
	}

	.details .name {
		width: 66px;
	}

	.details .used {
		grid-template-columns: 70px 136px;
		margin-right: -14px;
	}

	.details .total {
		grid-template-columns: 64px auto;
	}

	dt {
		color: #5a6779;
		text-align: right;
	}

	.mini-bar {
		height: 13px;
		border: 1px solid #a5a9ae;
		background: #fff;
	}

	/* browser */
	.browser {
		inset: 21px 254px 1px 24px;
		border: 3px solid #000;
		border-top: 1px solid #474747;
		border-radius: 5px 5px 2px 0;
		background: #000;
	}

	.tabstrip {
		display: flex;
		height: 41px;
		padding: 7px 0 0 17px;
	}

	.tab {
		display: flex;
		align-items: center;
		gap: 6px;
		width: 230px;
		height: 34px;
		padding: 0 10px 0 5px;
		color: #b9bbbe;
	}

	.tab span {
		flex: 1;
		overflow: hidden;
		white-space: nowrap;
		mask-image: linear-gradient(90deg, #000 90%, transparent);
	}

	.tab.active {
		gap: 8px;
		width: 240px;
		padding: 0 11px 0 12px;
		border-radius: 8px 8px 0 0;
		background: #35363a;
		color: #f5f5f5;
	}

	.new-tab {
		width: 44px;
		height: 34px;
	}

	.tab-search {
		width: 20px;
		height: 34px;
		margin-left: auto;
	}

	.dark-buttons {
		display: flex;
		height: 17px;
		margin: -8px 1px 0 13px;
		border: 1px solid #484541;
		border-radius: 0 0 4px 4px;
	}

	.dark-buttons button {
		width: 25px;
		padding-right: 3px;
	}

	.dark-buttons button + button {
		border-left: 1px solid #484541;
	}

	.dark-buttons button:last-child {
		width: 40px;
	}

	.browser-toolbar {
		display: flex;
		align-items: center;
		height: 36px;
		padding: 0 6px;
		background: #35363a;
	}

	.browser-toolbar button {
		width: 32px;
	}

	.omnibox {
		display: flex;
		align-items: center;
		flex: 1;
		gap: 16px;
		height: 28px;
		margin: 0 5px 0 6px;
		padding: 0 11px 0 13px;
		border-radius: 14px;
		background: #202124;
	}

	/* host part bright, path part dimmed */
	.omnibox input {
		flex: 1;
		margin-left: -5px;
		font-size: 13px;
		color: transparent;
		background: linear-gradient(90deg, #f1f2f3 133px, #92969b 133px);
		background-clip: text;
	}

	.page {
		display: flex;
		flex-direction: column;
		flex: 1;
		min-height: 0;
		overflow: hidden;
		background: #e1ffca;
		color: #3c4a3b;
		font-family: 'Open Sans', 'Trebuchet MS', sans-serif;
		white-space: nowrap;
	}

	.post {
		margin-left: 28px;
		padding: 4px 10px;
	}

	.first {
		flex: none;
		height: 131px;
		border-radius: 0 0 7px 7px;
		background: #fff;
		color: #4a4a4a;
	}

	.second {
		flex: 1;
		min-height: 0;
		overflow: hidden;
		margin-top: 4px;
		border-radius: 7px 7px 0 0;
		background: #e1ebd4;
	}

	.post-text {
		font-size: 13px;
		line-height: 18px;
	}

	.post-text a {
		border-bottom: 1px solid #4c7da8;
		color: #4d7fae;
		text-decoration: none;
	}

	.screen .arrow-smiley {
		display: inline-block;
		vertical-align: -3px;
	}

	.post-text p + p {
		margin-top: 19px;
	}

	.signature {
		margin-top: 19px;
		padding-top: 4px;
		border-top: 1px solid #bdbdbd;
		font-family: 'DejaVu Sans', Verdana, sans-serif;
		line-height: 15px;
		color: #984e3c;
	}

	.signature a {
		font-weight: 700;
		color: #4682a9;
	}

	h3 {
		font-size: 15px;
		font-weight: 600;
		line-height: 22px;
		color: #35452f;
	}

	.byline {
		display: flex;
		align-items: center;
		gap: 7px;
		height: 20px;
		margin-bottom: 5px;
		font-family: 'DejaVu Sans', Verdana, sans-serif;
		font-size: 10px;
	}

	blockquote {
		margin: 13px 0 0 26px;
		padding: 7px 4px;
		border: 1px solid #d8d6c6;
		background: #ebeadd;
		font-size: 12px;
		line-height: 18px;
	}

	blockquote div {
		margin-top: 4px;
	}

	.cookie-row {
		display: flex;
		align-items: flex-end;
		height: 40px;
		background: #f0f0f0;
	}

	.cookiebar {
		display: flex;
		flex: 1;
		height: 40px;
		padding: 7px 16px 0 11px;
		background: #92a47f;
		font-family: 'Liberation Sans', Arial, sans-serif;
		font-size: 14px;
		line-height: 16px;
		color: #fff;
	}

	.cookiebar p {
		flex: 1;
		text-align: center;
	}

	.cookiebar button {
		height: 16px;
	}

	.scroll-down {
		width: 18px;
		height: 17px;
	}

	/* format dialog */
	.dialog {
		position: absolute;
		top: 211px;
		left: 359px;
		width: 266px;
		padding: 0 6px 6px;
		border: 1px solid #101a26;
		border-radius: 6px 6px 0 0;
		background: linear-gradient(180deg, #93aecb 0, #a8c0dc 28px, #bcd2ea 120px, #cfdff0 124px, #b4cde9 170px, #b5cfe9 100%);
		box-shadow: inset 0 0 0 1px #cfe3f5, 0 0 3px rgba(0, 0, 0, 0.4);
	}

	.dialog header {
		display: flex;
		align-items: center;
		justify-content: space-between;
		height: 28px;
		padding: 5px 3px 0 4px;
	}

	h1 {
		font-size: 11px;
		line-height: 16px;
		color: #0b1420;
	}

	.dialog header button {
		width: 31px;
		height: 17px;
		border: 1px solid #5b1a1a;
		border-radius: 2px;
		background: linear-gradient(180deg, #e8a597 0, #d3786a 48%, #bc3a28 52%, #cf5d43 100%);
	}

	form {
		display: flex;
		flex-direction: column;
		height: 427px;
		padding: 10px 11px;
		background: #f0f0f0;
		font-family: 'DejaVu Sans Condensed', Tahoma, sans-serif;
		font-size: 11px;
		line-height: 15px;
		color: #000;
	}

	.field {
		display: flex;
		flex-direction: column;
		gap: 3px;
		margin-bottom: 8px;
	}

	.volume {
		gap: 1px;
	}

	select,
	.field input {
		height: 21px;
		padding: 0 2px;
		border: 1px solid #aaadb0;
		border-radius: 2px;
		background: #f4f4f4;
		font: inherit;
		color: #6d6d6d;
		opacity: 1;
		appearance: none;
	}

	select {
		background: #f4f4f4 url("data:image/svg+xml,%3Csvg xmlns='http://www.w3.org/2000/svg' width='8' height='4'%3E%3Cpath d='M0 0h8L4 4z' fill='%23999'/%3E%3C/svg%3E") no-repeat right 4px center;
	}

	.field input {
		background: #f0f0f0;
	}

	form button {
		width: 73px;
		height: 21px;
		border: 1px solid #707070;
		border-radius: 3px;
		background: linear-gradient(180deg, #f2f2f2 0, #ebebeb 48%, #dddddd 52%, #cfcfcf 100%);
	}

	form button:disabled {
		border-color: #adb2b5;
		background: #f4f4f4;
		color: #838383;
	}

	form .restore {
		width: 133px;
		margin: 14px 0 22px 1px;
	}

	fieldset {
		display: flex;
		flex-direction: column;
		gap: 3px;
		height: 64px;
		margin: 2px 0 14px;
		padding: 7px 6px 0;
		border: 1px solid #dedede;
		border-radius: 3px;
	}

	legend {
		padding: 0 2px;
	}

	fieldset label {
		display: flex;
		align-items: center;
		gap: 2px;
		color: #6d6d6d;
	}

	fieldset input {
		width: 13px;
		height: 13px;
		margin: 0;
		border: 1px solid #b1b1b1;
		background: #f6f6f6;
		appearance: none;
	}

	fieldset input:checked {
		background: #f6f6f6 url("data:image/svg+xml,%3Csvg xmlns='http://www.w3.org/2000/svg' width='9' height='9'%3E%3Cpath d='M1.500 4l2 4L8 1' fill='none' stroke='%23aaa' stroke-width='1.800'/%3E%3C/svg%3E") no-repeat center;
	}

	progress {
		width: 100%;
		height: 13px;
		border: 1px solid #a3a3a3;
		border-radius: 2px;
		background: linear-gradient(180deg, #eee 0, #d9d9d9 45%, #c9c9c9 50%, #d2d2d2 100%);
		appearance: none;
	}

	progress::-webkit-progress-bar {
		background: transparent;
	}

	.actions {
		display: flex;
		justify-content: flex-end;
		gap: 8px;
		margin: 29px 2px 0;
	}

	.busy {
		position: absolute;
		top: 362px;
		left: 684px;
	}

	/* taskbar */
	.taskbar {
		display: flex;
		align-items: center;
		flex: none;
		height: 40px;
		padding-left: 8px;
		border-top: 1px solid #52637b;
		background: linear-gradient(90deg, #8596ae 0, #95a8c4 80px, #a8bedd 200px, #a9c0df 1050px, #7f93ae 1090px, #788ca6 100%);
		box-shadow: inset 0 1px 0 #c8d6e8;
	}

	.start {
		margin-right: 13px;
	}

	.task {
		width: 59px;
		height: 39px;
		margin-right: 3px;
	}

	.open {
		border: 1px solid #5c7089;
		border-radius: 3px;
		background: linear-gradient(145deg, #dbe5f1, #b6c9e2 60%, #b4c9e4);
		box-shadow: inset 0 0 0 1px #dfe9f4;
	}

	.stacked {
		width: 54px;
		margin-right: 8px;
		box-shadow: inset 0 0 0 1px #dfe9f4, 3px 0 0 -1px #a9bdd8, 4px 0 0 -1px #5c7089;
	}

	.bright {
		background: linear-gradient(145deg, #f6f8fb, #dce6f3);
	}

	.green {
		background: linear-gradient(100deg, #4a9150, #2fbf38 50%, #29e62a);
	}

	.tray {
		display: flex;
		align-items: center;
		gap: 8px;
		height: 100%;
		margin-left: auto;
		color: #fff;
	}

	.expand {
		margin-right: 4px;
	}

	.clock {
		display: flex;
		flex-direction: column;
		align-items: center;
		width: 68px;
		line-height: 17px;
	}

	.show-desktop {
		width: 13px;
		height: 100%;
		margin-left: -4px;
		border: 1px solid #4e6077;
		background: linear-gradient(145deg, #a5b4c6, #6a7c93 50%, #8b9bb0);
		box-shadow: inset 0 0 0 1px #a9b8ca;
	}
</style>
